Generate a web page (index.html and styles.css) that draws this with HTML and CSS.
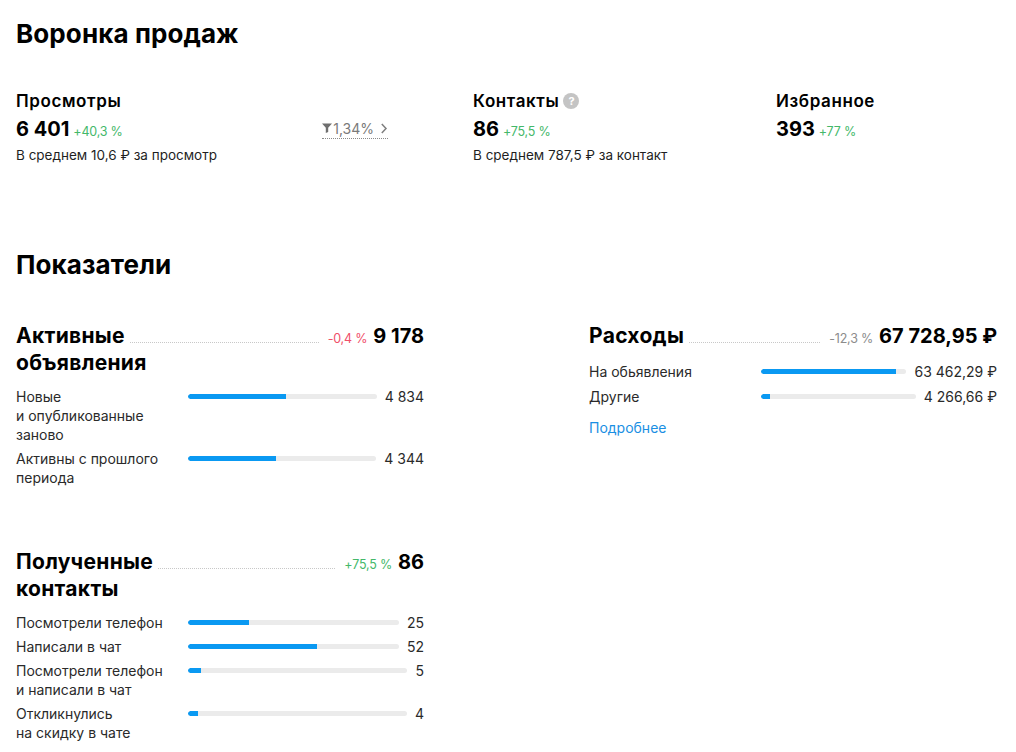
FILE: index.html
```html
<!DOCTYPE html>
<html lang="ru">
<head>
<meta charset="utf-8">
<title>Воронка продаж</title>
<link rel="stylesheet" href="styles.css">
</head>
<body>
<main class="page">
  <h1 class="h1">Воронка продаж</h1>
  <section class="funnel">
    <div class="fcol fcol-views">
      <div class="fhead">Просмотры</div>
      <div class="frow">
        <span class="fval">6 401</span>
        <span class="delta up">+40,3 %</span>
        <a class="conv" href="#">
          <svg class="conv-ico" width="10" height="10" viewBox="0 0 10 10"><path d="M0 0.5H10L6.2 4.8V9L3.8 10V4.8Z" fill="#6f6f6f"/></svg>
          <span>1,34%</span>
          <svg class="conv-chev" width="8" height="11" viewBox="0 0 8 11"><path d="M1.8 1L6 5.5L1.8 10" fill="none" stroke="#7f7f7f" stroke-width="1.5"/></svg>
        </a>
      </div>
      <div class="fsub">В среднем 10,6 ₽ за просмотр</div>
    </div>
    <div class="fcol">
      <div class="fhead">Контакты <span class="qmark">?</span></div>
      <div class="frow">
        <span class="fval">86</span>
        <span class="delta up">+75,5 %</span>
      </div>
      <div class="fsub">В среднем 787,5 ₽ за контакт</div>
    </div>
    <div class="fcol">
      <div class="fhead">Избранное</div>
      <div class="frow">
        <span class="fval">393</span>
        <span class="delta up">+77 %</span>
      </div>
    </div>
  </section>

  <h2 class="h1 h2">Показатели</h2>
  <section class="stats">
    <div class="stats-col">
      <div class="block">
        <div class="bhead">
          <span class="btitle">Активные</span>
          <span class="leader"></span>
          <span class="delta down">-0,4 %</span>
          <span class="bval">9 178</span>
        </div>
        <div class="btitle btitle-cont">объявления</div>
        <div class="rows rows-ads">
          <div class="row">
            <div class="rlabel">Новые<br>и опубликованные<br>заново</div>
            <div class="bar"><div class="fill" style="width:52%"></div></div>
            <div class="rval">4 834</div>
          </div>
          <div class="row">
            <div class="rlabel">Активны с прошлого<br>периода</div>
            <div class="bar"><div class="fill" style="width:47%"></div></div>
            <div class="rval">4 344</div>
          </div>
        </div>
      </div>
      <div class="block block-contacts">
        <div class="bhead">
          <span class="btitle">Полученные</span>
          <span class="leader"></span>
          <span class="delta up">+75,5 %</span>
          <span class="bval">86</span>
        </div>
        <div class="btitle btitle-cont">контакты</div>
        <div class="rows">
          <div class="row">
            <div class="rlabel">Посмотрели телефон</div>
            <div class="bar"><div class="fill" style="width:29%"></div></div>
            <div class="rval">25</div>
          </div>
          <div class="row">
            <div class="rlabel">Написали в чат</div>
            <div class="bar"><div class="fill" style="width:61%"></div></div>
            <div class="rval">52</div>
          </div>
          <div class="row">
            <div class="rlabel">Посмотрели телефон<br>и написали в чат</div>
            <div class="bar"><div class="fill" style="width:6%"></div></div>
            <div class="rval">5</div>
          </div>
          <div class="row">
            <div class="rlabel">Откликнулись<br>на скидку в чате</div>
            <div class="bar"><div class="fill" style="width:4.5%"></div></div>
            <div class="rval">4</div>
          </div>
        </div>
      </div>
    </div>
    <div class="stats-col">
      <div class="block">
        <div class="bhead">
          <span class="btitle">Расходы</span>
          <span class="leader"></span>
          <span class="delta neutral">-12,3 %</span>
          <span class="bval">67 728,95 ₽</span>
        </div>
        <div class="rows rows-cost">
          <div class="row">
            <div class="rlabel">На обьявления</div>
            <div class="bar"><div class="fill" style="width:93%"></div></div>
            <div class="rval">63 462,29 ₽</div>
          </div>
          <div class="row">
            <div class="rlabel">Другие</div>
            <div class="bar"><div class="fill" style="width:6%"></div></div>
            <div class="rval">4 266,66 ₽</div>
          </div>
        </div>
        <a class="more" href="#">Подробнее</a>
      </div>
    </div>
  </section>
</main>
</body>
</html>
```

FILE: styles.css
```css
* { box-sizing: border-box; }
html, body { margin: 0; padding: 0; background: #fff; }
body {
  font-family: Inter, "Noto Sans", "Liberation Sans", sans-serif;
  color: #000;
}
.page {
  padding: 17px 19px 0 16px;
  width: 1016px;
}
.h1 {
  margin: 0;
  font-size: 26px;
  line-height: 34px;
  font-weight: 700;
  letter-spacing: 0.1px;
}
.funnel {
  display: grid;
  grid-template-columns: 457px 303px 1fr;
  margin-top: 39px;
}
.fcol-views .frow { width: 372px; }
.fhead {
  font-size: 17px;
  line-height: 22px;
  font-weight: 600;
  display: flex;
  align-items: center;
  gap: 4px;
  letter-spacing: 0.6px;
}
.qmark {
  width: 16px;
  height: 16px;
  border-radius: 50%;
  background: #c4c4c4;
  color: #fff;
  font-size: 11px;
  line-height: 16px;
  font-weight: 700;
  text-align: center;
  letter-spacing: 0;
}
.frow {
  display: flex;
  align-items: baseline;
  margin-top: 4px;
  height: 26px;
}
.fval {
  font-size: 20px;
  line-height: 26px;
  font-weight: 700;
}
.delta {
  font-size: 12.5px;
  margin-left: 4px;
  letter-spacing: -0.2px;
}
.up { color: #44b86a; }
.down { color: #f0506a; }
.neutral { color: #8c8c8c; }
.conv {
  margin-left: auto;
  display: flex;
  align-items: center;
  gap: 1px;
  color: #7a7a7a;
  font-size: 14px;
  text-decoration: none;
  border-bottom: 1px dotted #8a8a8a;
  padding-bottom: 1px;
  align-self: center;
}
.conv-chev { margin-left: 5px; }
.fsub {
  font-size: 13.5px;
  line-height: 18px;
  margin-top: 4px;
  color: #1f1f1f;
}
.h2 { margin-top: 84px; }
.stats {
  display: grid;
  grid-template-columns: 408px 408px;
  justify-content: space-between;
  margin-top: 40px;
}
.block-contacts { margin-top: 61px; }
.bhead {
  display: flex;
  align-items: baseline;
}
.btitle {
  font-size: 21px;
  line-height: 27px;
  font-weight: 700;
  letter-spacing: 0.3px;
}
.leader {
  flex: 1;
  border-bottom: 1px dotted #c8c8c8;
  margin: 0 5px;
}
.bval {
  font-size: 20px;
  font-weight: 700;
  margin-left: 6px;
}
.rows {
  margin-top: 11px;
  display: flex;
  flex-direction: column;
  gap: 5px;
}
.rows-cost { margin-top: 13px; gap: 6px; }
.row {
  display: grid;
  grid-template-columns: 163px 1fr auto;
  column-gap: 9px;
  align-items: start;
  font-size: 14px;
  line-height: 19px;
  color: #2a2a2a;
}
.bar {
  height: 5px;
  margin-top: 7px;
  margin-right: -1px;
  background: #ebebeb;
  border-radius: 3px;
  overflow: hidden;
}
.fill {
  height: 100%;
  background: #0a99f2;
  border-radius: 3px 0 0 3px;
}
.rval { text-align: right; }
.more {
  display: inline-block;
  margin-top: 12px;
  font-size: 14px;
  line-height: 19px;
  color: #1a8fe3;
  text-decoration: none;
}
```
